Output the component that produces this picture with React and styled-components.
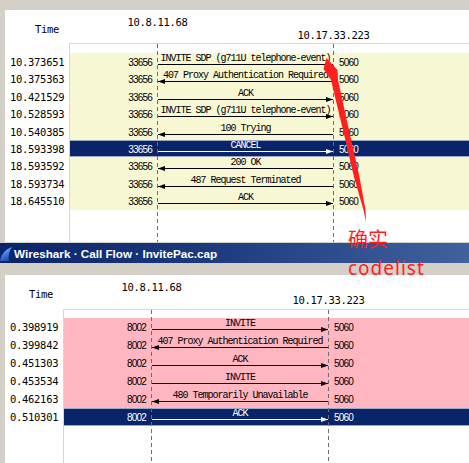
import styled, { createGlobalStyle } from "styled-components";

const GlobalStyle = createGlobalStyle`
  html, body {
    margin: 0;
    padding: 0;
    background: #d4d0c8;
    overflow: hidden;
  }
  #root {
    width: 469px;
    height: 463px;
  }
`;

const topFlow = {
  timeWidth: 64,
  headerHeight: 33,
  gap: 9,
  rowHeight: 17.4,
  span: 176,
  tint: "#f7f7d4",
  height: 232,
  hosts: ["10.8.11.68", "10.17.33.223"],
  rows: [
    { time: "10.373651", from: "33656", to: "5060", label: "INVITE SDP (g711U telephone-event)", dir: "right" },
    { time: "10.375363", from: "33656", to: "5060", label: "407 Proxy Authentication Required", dir: "left" },
    { time: "10.421529", from: "33656", to: "5060", label: "ACK", dir: "right" },
    { time: "10.528593", from: "33656", to: "5060", label: "INVITE SDP (g711U telephone-event)", dir: "right" },
    { time: "10.540385", from: "33656", to: "5060", label: "100 Trying", dir: "left" },
    { time: "18.593398", from: "33656", to: "5060", label: "CANCEL", dir: "right", selected: true },
    { time: "18.593592", from: "33656", to: "5060", label: "200 OK", dir: "left" },
    { time: "18.593734", from: "33656", to: "5060", label: "487 Request Terminated", dir: "left" },
    { time: "18.645510", from: "33656", to: "5060", label: "ACK", dir: "right" },
  ],
};

const bottomFlow = {
  timeWidth: 58,
  headerHeight: 34,
  gap: 8,
  rowHeight: 18,
  span: 177,
  tint: "#ffb6c1",
  height: null,
  hosts: ["10.8.11.68", "10.17.33.223"],
  rows: [
    { time: "0.398919", from: "8002", to: "5060", label: "INVITE", dir: "right" },
    { time: "0.399842", from: "8002", to: "5060", label: "407 Proxy Authentication Required", dir: "left" },
    { time: "0.451303", from: "8002", to: "5060", label: "ACK", dir: "right" },
    { time: "0.453534", from: "8002", to: "5060", label: "INVITE", dir: "right" },
    { time: "0.462163", from: "8002", to: "5060", label: "480 Temporarily Unavailable", dir: "left" },
    { time: "0.510301", from: "8002", to: "5060", label: "ACK", dir: "right", selected: true },
  ],
};

const PORT_WIDTH = 87;

function Arrow({ width, dir }) {
  const w = width;
  const head =
    dir === "right"
      ? `${w},3.5 ${w - 7},1 ${w - 7},6`
      : `0,3.5 7,1 7,6`;
  return (
    <ArrowSvg width={w} height={7} viewBox={`0 0 ${w} 7`}>
      <line x1="0" y1="3.5" x2={w} y2="3.5" stroke="currentColor" strokeWidth="1" shapeRendering="crispEdges" />
      <polygon points={head} fill="currentColor" />
    </ArrowSvg>
  );
}

function Flow({ flow }) {
  const { timeWidth, headerHeight, gap, rowHeight, span, tint, height, hosts, rows } = flow;
  return (
    <FlowPanel $height={height}>
      <PanelHeader $height={headerHeight} $timeWidth={timeWidth}>
        <TimeHead>Time</TimeHead>
        <HostRow>
          <Spacer $width={PORT_WIDTH + 1} />
          <HostMark $top={6}>
            <span>{hosts[0]}</span>
          </HostMark>
          <Spacer $width={span - 1} />
          <HostMark $top={19}>
            <span>{hosts[1]}</span>
          </HostMark>
        </HostRow>
      </PanelHeader>
      <PanelBody $timeWidth={timeWidth}>
        <TimeList $gap={gap}>
          {rows.map((r) => (
            <TimeCell key={r.time} $height={rowHeight}>
              {r.time}
            </TimeCell>
          ))}
        </TimeList>
        <Graph $gap={gap} $span={span}>
          {rows.map((r) => (
            <FlowRow key={r.time} $height={rowHeight} $tint={tint} $selected={r.selected}>
              <PortCell $side="left">{r.from}</PortCell>
              <ArrowCell $width={span - 1}>
                <MsgLabel>{r.label}</MsgLabel>
                <Arrow width={span - 1} dir={r.dir} />
              </ArrowCell>
              <PortCell $side="right">{r.to}</PortCell>
            </FlowRow>
          ))}
        </Graph>
      </PanelBody>
    </FlowPanel>
  );
}

function SharkFin() {
  return (
    <svg width="12" height="15" viewBox="0 0 12 15">
      <defs>
        <linearGradient id="fin" x1="0" y1="0" x2="0.4" y2="1">
          <stop offset="0" stopColor="#b8dcff" />
          <stop offset="0.35" stopColor="#5a9cf0" />
          <stop offset="1" stopColor="#1f4fb8" />
        </linearGradient>
      </defs>
      <path d="M0 15 C1 9 5 3 12 1 C9 5 8 10 9 15 Z" fill="url(#fin)" />
    </svg>
  );
}

export default function App() {
  return (
    <>
      <GlobalStyle />
      <Screen>
        <Flow flow={topFlow} />
        <TitleBar>
          <SharkFin />
          <TitleText>Wireshark · Call Flow · InvitePac.cap</TitleText>
        </TitleBar>
        <Flow flow={bottomFlow} />

        <RedArrow width="469" height="463" viewBox="0 0 469 463">
          <polygon
            points="326.5,58 337.5,70 338,80 348.5,128 359.5,177 365.5,210 366,222 363.5,210 354,177 342.5,128 331,80 323.5,69"
            fill="#ff1f1f"
          />
        </RedArrow>
        <Annotation>
          <NoteCjk>确实</NoteCjk>
          <NoteLatin>codelist</NoteLatin>
        </Annotation>
      </Screen>
    </>
  );
}

const monoDigits = `
  font-family: "DejaVu Sans Mono", "Liberation Mono", monospace;
  font-size: 10.5px;
  letter-spacing: -0.3px;
  line-height: 12px;
  color: #000;
`;

const Screen = styled.div`
  position: relative;
  width: 469px;
  height: 463px;
  overflow: hidden;
  display: flex;
  flex-direction: column;
  padding-top: 10px;
  box-sizing: border-box;
  background: #d4d0c8;
`;

const FlowPanel = styled.div`
  margin-left: 5px;
  background: #fff;
  display: flex;
  flex-direction: column;
  overflow: hidden;
  ${(p) => (p.$height ? `height: ${p.$height}px; flex: none;` : "flex: 1;")}
`;

const PanelHeader = styled.div`
  height: ${(p) => p.$height}px;
  flex: none;
  display: grid;
  grid-template-columns: ${(p) => p.$timeWidth}px 1fr;
`;

const TimeHead = styled.div`
  ${monoDigits}
  text-align: right;
  padding-right: 10px;
  padding-top: 13px;
`;

const HostRow = styled.div`
  display: flex;
  align-items: flex-start;
`;

const Spacer = styled.div`
  width: ${(p) => p.$width}px;
  flex: none;
`;

const HostMark = styled.div`
  ${monoDigits}
  width: 1px;
  flex: none;
  display: flex;
  justify-content: center;
  white-space: nowrap;
  padding-top: ${(p) => p.$top}px;
`;

const PanelBody = styled.div`
  flex: 1;
  display: grid;
  grid-template-columns: ${(p) => p.$timeWidth}px 1fr;
`;

const TimeList = styled.div`
  padding-top: ${(p) => p.$gap + 1}px;
`;

const TimeCell = styled.div`
  ${monoDigits}
  height: ${(p) => p.$height}px;
  box-sizing: border-box;
  padding-left: 5px;
  padding-top: 3px;
  white-space: nowrap;
`;

const Graph = styled.div`
  position: relative;
  border-top: 1px solid #d6d6d6;
  border-left: 1px solid #d6d6d6;
  padding-top: ${(p) => p.$gap}px;

  &::before,
  &::after {
    content: "";
    position: absolute;
    top: 0;
    bottom: 0;
    width: 1px;
    z-index: 1;
    background: repeating-linear-gradient(
      to bottom,
      #6e6e6e 0 4px,
      transparent 4px 7px
    );
  }
  &::before {
    left: ${PORT_WIDTH}px;
  }
  &::after {
    left: ${(p) => PORT_WIDTH + p.$span}px;
  }
`;

const FlowRow = styled.div`
  display: flex;
  align-items: flex-start;
  height: ${(p) => p.$height}px;
  box-sizing: border-box;
  background: ${(p) => (p.$selected ? "#0a246a" : p.$tint)};
  color: ${(p) => (p.$selected ? "#fff" : "#000")};
  box-shadow: ${(p) =>
    p.$selected ? "inset 0 1px 0 #9aa6c4, inset 0 -1px 0 #9aa6c4" : "none"};
`;

const PortCell = styled.div`
  font-family: "Liberation Sans", Arial, sans-serif;
  font-size: 10px;
  letter-spacing: -0.8px;
  line-height: 12px;
  padding-top: 4px;
  box-sizing: border-box;
  white-space: nowrap;
  color: inherit;
  ${(p) =>
    p.$side === "left"
      ? `width: ${PORT_WIDTH}px; flex: none; text-align: right; padding-right: 5px;`
      : `padding-left: 6px;`}
`;

const ArrowCell = styled.div`
  width: ${(p) => p.$width}px;
  margin-left: 1px;
  flex: none;
  display: flex;
  flex-direction: column;
  align-items: center;
`;

const MsgLabel = styled.div`
  font-family: "Liberation Mono", "Courier New", monospace;
  font-size: 10px;
  letter-spacing: -1px;
  line-height: 10px;
  height: 10px;
  margin-top: 1px;
  white-space: nowrap;
`;

const ArrowSvg = styled.svg`
  display: block;
  margin-top: -3px;
  overflow: visible;
`;

const TitleBar = styled.div`
  flex: none;
  height: 20px;
  margin-top: 1px;
  margin-bottom: 12px;
  display: flex;
  align-items: center;
  gap: 2px;
  background: linear-gradient(90deg, #0a246a 0%, #1d3a7e 45%, #41629e 100%);
`;

const TitleText = styled.span`
  font-family: "Liberation Sans", Arial, sans-serif;
  font-weight: bold;
  font-size: 11.7px;
  color: #fff;
  white-space: nowrap;
`;

const RedArrow = styled.svg`
  position: absolute;
  left: 0;
  top: 0;
  pointer-events: none;
  z-index: 4;
`;

const Annotation = styled.div`
  position: absolute;
  left: 348px;
  top: 229px;
  z-index: 5;
  display: flex;
  flex-direction: column;
  gap: 8.5px;
  color: #ff1f1f;
  pointer-events: none;
`;

const NoteCjk = styled.div`
  font-family: "Noto Sans CJK SC", "Noto Sans", sans-serif;
  font-size: 20px;
  line-height: 20px;
`;

const NoteLatin = styled.div`
  font-family: "Noto Sans", "Noto Sans CJK SC", sans-serif;
  font-size: 19px;
  line-height: 20px;
  letter-spacing: 1px;
`;
